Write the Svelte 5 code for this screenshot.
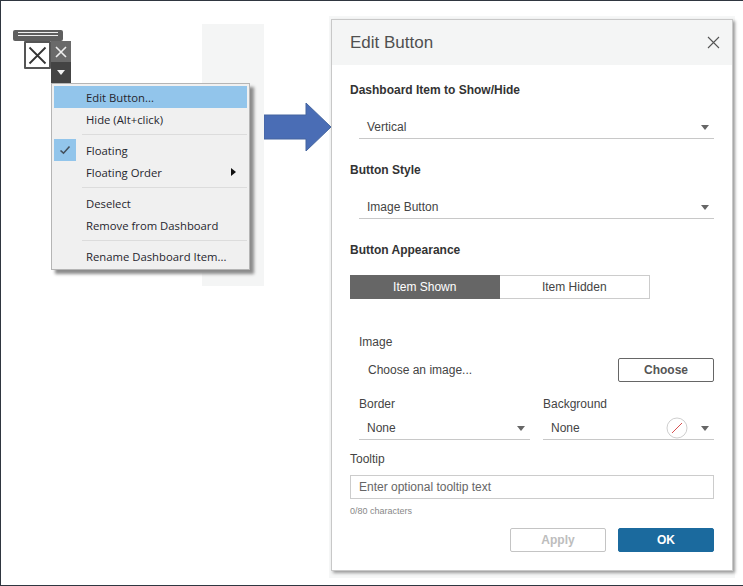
<script>
  const menu = [
    [{ label: 'Edit Button...', hot: true }, { label: 'Hide (Alt+click)' }],
    [{ label: 'Floating', checked: true }, { label: 'Floating Order', more: true }],
    [{ label: 'Deselect' }, { label: 'Remove from Dashboard' }],
    [{ label: 'Rename Dashboard Item...' }]
  ];
</script>

<div class="page">
  <div class="strip"></div>
  <div class="halo"></div>

  <div class="tile">
    <div class="grip"><span></span><span></span></div>
    <div class="preview">
      <svg width="21" height="21" viewBox="0 0 21 21"><path d="M2.5 2.5 18.5 18.5M18.5 2.5 2.5 18.5" stroke="#333" stroke-width="1.8" fill="none" /></svg>
    </div>
    <div class="tools">
      <div class="tool-close">
        <svg width="12" height="12" viewBox="0 0 12 12"><path d="M1 1 11 11M11 1 1 11" stroke="#eee" stroke-width="1.6" fill="none" /></svg>
      </div>
      <div class="tool-more"><i></i></div>
    </div>
  </div>

  <div class="menu">
    {#each menu as group, g}
      {#if g > 0}<div class="sep"></div>{/if}
      {#each group as item}
        <div class="item" class:hot={item.hot}>
          <span class="check" class:on={item.checked}>
            {#if item.checked}
              <svg width="12" height="10" viewBox="0 0 12 10"><path d="M1.5 5.5 4.5 8.2 10.5 1.5" stroke="#44505c" stroke-width="1.6" fill="none" /></svg>
            {/if}
          </span>
          <span>{item.label}</span>
          {#if item.more}<i class="more"></i>{/if}
        </div>
      {/each}
    {/each}
  </div>

  <svg class="arrow" width="68" height="48" viewBox="0 0 68 48"><path d="M0 12H42V0L67 24 42 48V36H0Z" fill="#4a6db5" stroke="#44659f" /></svg>

  <div class="dialog">
    <header>
      <h1>Edit Button</h1>
      <svg width="13" height="13" viewBox="0 0 13 13"><path d="M1 1 12 12M12 1 1 12" stroke="#555" stroke-width="1.1" fill="none" /></svg>
    </header>

    <div class="body">
      <h2 class="first">Dashboard Item to Show/Hide</h2>
      <div class="select wide"><span>Vertical</span><i></i></div>

      <h2>Button Style</h2>
      <div class="select wide"><span>Image Button</span><i></i></div>

      <h2>Button Appearance</h2>
      <div class="toggle">
        <div class="seg on">Item Shown</div>
        <div class="seg">Item Hidden</div>
      </div>

      <div class="label image-label">Image</div>
      <div class="choose-row">
        <span>Choose an image...</span>
        <button>Choose</button>
      </div>

      <div class="pair">
        <div class="col">
          <div class="label">Border</div>
          <div class="select small"><span>None</span><i></i></div>
        </div>
        <div class="col">
          <div class="label">Background</div>
          <div class="select small">
            <span>None</span>
            <svg class="swatch" width="22" height="22" viewBox="0 0 22 22">
              <circle cx="11" cy="11" r="10" fill="#fff" stroke="#cfcfcf" />
              <path d="M6 16 16 6" stroke="#c22" stroke-width="0.8" />
            </svg>
            <i></i>
          </div>
        </div>
      </div>

      <div class="label tooltip-label">Tooltip</div>
      <div class="input">Enter optional tooltip text</div>
      <div class="count">0/80 characters</div>

      <div class="actions">
        <button class="apply">Apply</button>
        <button class="ok">OK</button>
      </div>
    </div>
  </div>
</div>

<style>
  :global(body) {
    margin: 0;
    background: #fff;
  }

  .page {
    position: relative;
    width: 743px;
    height: 586px;
    box-sizing: border-box;
    border-top: 1px solid #2f3640;
    border-left: 1px solid #2f3640;
    border-bottom: 1px solid #2f3640;
    overflow: hidden;
    font-family: "Liberation Sans", Arial, sans-serif;
    color: #333;
  }

  .strip {
    position: absolute;
    left: 201px;
    top: 23px;
    width: 62px;
    height: 262px;
    background: #f4f5f5;
  }

  .halo {
    position: absolute;
    left: 328px;
    top: 15px;
    width: 406px;
    height: 562px;
    background: #f6f7f7;
  }

  .tile {
    position: absolute;
    left: 12px;
    top: 29px;
    width: 60px;
    height: 54px;
  }

  .grip {
    width: 50px;
    height: 11px;
    background: #5f5f5f;
    border-radius: 2px;
    display: flex;
    flex-direction: column;
    align-items: center;
    gap: 2px;
    padding-top: 2px;
    box-sizing: border-box;
  }

  .grip span {
    width: 40px;
    height: 1px;
    background: #f0f0f0;
  }

  .preview {
    position: absolute;
    left: 11px;
    top: 11px;
    width: 27px;
    height: 28px;
    box-sizing: border-box;
    background: #fff;
    border: 2px solid #555;
    border-radius: 1px;
    display: flex;
    align-items: center;
    justify-content: center;
  }

  .tools {
    position: absolute;
    left: 38px;
    top: 11px;
    width: 20px;
  }

  .tool-close {
    height: 21px;
    background: #6a6a6a;
    display: flex;
    align-items: center;
    justify-content: center;
  }

  .tool-more {
    height: 21px;
    background: #444;
    display: flex;
    align-items: center;
    justify-content: center;
  }

  .tool-more i {
    border: 4px solid transparent;
    border-top: 5px solid #f2f2f2;
    border-bottom: 0;
  }

  .menu {
    position: absolute;
    left: 50px;
    top: 82px;
    width: 199px;
    height: 187px;
    box-sizing: border-box;
    padding: 2px;
    background: #f0f0f0;
    border: 1px solid #b5b5b5;
    box-shadow: 4px 4px 3px #8c8c8c;
    font-family: "Open Sans", "Liberation Sans", sans-serif;
    font-size: 11.3px;
    color: #26262e;
  }

  .item {
    height: 22px;
    display: flex;
    align-items: center;
    position: relative;
  }

  .item.hot {
    background: #92c5eb;
  }

  .check {
    width: 22px;
    height: 22px;
    margin-right: 10px;
    display: flex;
    align-items: center;
    justify-content: center;
  }

  .check.on {
    background: #92c5eb;
  }

  .more {
    position: absolute;
    right: 11px;
    top: 7px;
    border: 4px solid transparent;
    border-left: 5px solid #111;
    border-right: 0;
  }

  .sep {
    height: 1px;
    background: #dcdcdc;
    margin: 4px 0 4px 28px;
  }

  .arrow {
    position: absolute;
    left: 263px;
    top: 102px;
  }

  .dialog {
    position: absolute;
    left: 330px;
    top: 18px;
    width: 402px;
    height: 552px;
    box-sizing: border-box;
    background: #fff;
    border: 1px solid #c8c8c8;
    box-shadow: 2px 2px 3px #9a9a9a;
  }

  header {
    height: 45px;
    background: #f4f5f5;
    padding: 0 12px 0 18px;
    display: flex;
    align-items: center;
    justify-content: space-between;
  }

  h1 {
    margin: 0;
    font-size: 17px;
    font-weight: 400;
    color: #505050;
  }

  .body {
    padding: 0 18px;
    font-size: 12px;
  }

  h2 {
    margin: 0;
    font-size: 12px;
    line-height: 14px;
    font-weight: 700;
    color: #333;
    padding-top: 24px;
  }

  h2.first {
    padding-top: 18px;
  }

  .select {
    display: flex;
    align-items: center;
    border-bottom: 1px solid #c8c8c8;
    color: #444;
  }

  .select i {
    margin-left: auto;
    border: 4px solid transparent;
    border-top: 5px solid #666;
    border-bottom: 0;
  }

  .select.wide {
    margin: 19px 0 0 9px;
    height: 22px;
    padding: 0 5px 0 8px;
  }

  .select.small {
    height: 22px;
    padding: 0 5px 0 8px;
  }

  .swatch {
    margin-left: auto;
  }

  .swatch + i {
    margin-left: 13px;
  }

  .toggle {
    display: flex;
    width: 300px;
    height: 24px;
    margin-top: 18px;
  }

  .seg {
    flex: 1;
    display: flex;
    align-items: center;
    justify-content: center;
    box-sizing: border-box;
    border: 1px solid #ccc;
    border-left: 0;
    color: #444;
  }

  .seg.on {
    background: #666;
    border: 0;
    color: #fff;
  }

  .label {
    line-height: 14px;
    color: #444;
  }

  .image-label {
    margin: 36px 0 0 9px;
  }

  .choose-row {
    display: flex;
    align-items: center;
    justify-content: space-between;
    margin: 9px 0 0 18px;
    color: #444;
  }

  button {
    width: 96px;
    height: 24px;
    padding: 0;
    box-sizing: border-box;
    background: #fff;
    border: 1px solid #666;
    border-radius: 2px;
    font: 700 12px "Liberation Sans", Arial, sans-serif;
    color: #555;
  }

  .pair {
    display: flex;
    gap: 13px;
    margin: 15px 0 0 9px;
  }

  .col {
    flex: 1;
  }

  .col .label {
    margin-bottom: 6px;
  }

  .tooltip-label {
    margin-top: 12px;
  }

  .input {
    height: 24px;
    margin-top: 9px;
    padding-left: 8px;
    box-sizing: border-box;
    border: 1px solid #ccc;
    display: flex;
    align-items: center;
    color: #666;
  }

  .count {
    margin-top: 6px;
    font-size: 9px;
    line-height: 12px;
    color: #888;
  }

  .actions {
    display: flex;
    justify-content: flex-end;
    gap: 12px;
    margin-top: 11px;
  }

  .apply {
    border-color: #c4c4c4;
    color: #bdbdbd;
  }

  .ok {
    background: #1b6a9e;
    border-color: #1b6a9e;
    color: #fff;
  }
</style>
